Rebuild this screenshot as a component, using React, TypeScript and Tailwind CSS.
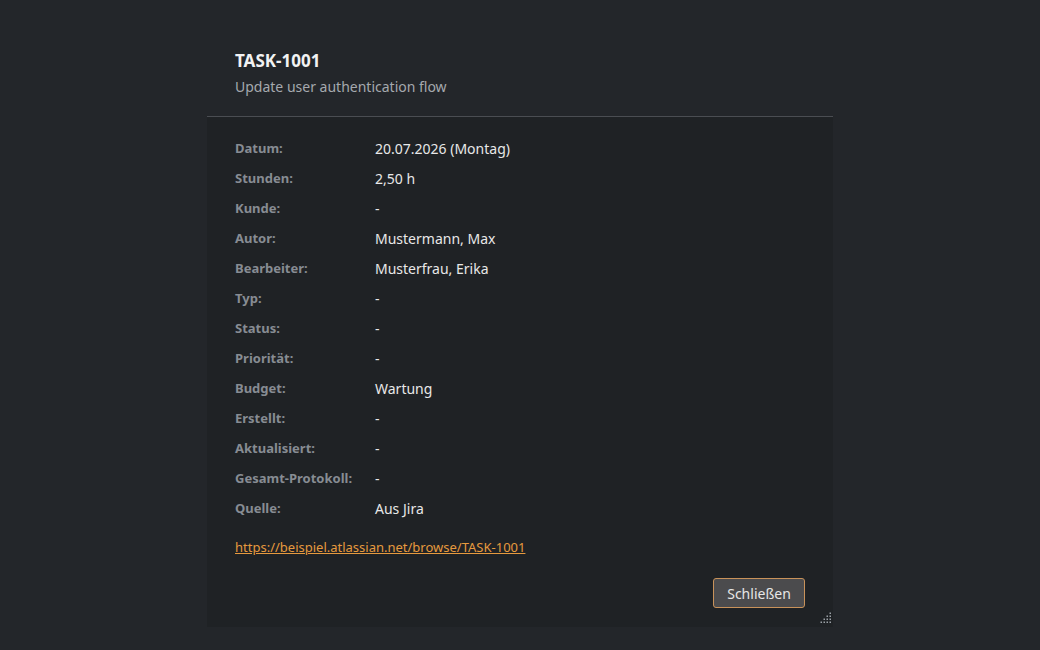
const ROWS: [string, string][] = [
  ['Datum:', '20.07.2026 (Montag)'],
  ['Stunden:', '2,50 h'],
  ['Kunde:', '-'],
  ['Autor:', 'Mustermann, Max'],
  ['Bearbeiter:', 'Musterfrau, Erika'],
  ['Typ:', '-'],
  ['Status:', '-'],
  ['Priorität:', '-'],
  ['Budget:', 'Wartung'],
  ['Erstellt:', '-'],
  ['Aktualisiert:', '-'],
  ['Gesamt-Protokoll:', '-'],
  ['Quelle:', 'Aus Jira'],
];

function ResizeGrip() {
  const dots: [number, number][] = [];
  for (let r = 0; r < 4; r++) {
    for (let c = 3 - r; c < 4; c++) dots.push([c * 3 + 1, r * 3 + 1]);
  }
  return (
    <svg width="12" height="12" viewBox="0 0 12 12" className="absolute bottom-[3px] right-[1px]">
      {dots.map(([x, y]) => (
        <rect key={`${x}-${y}`} x={x - 0.5} y={y - 0.5} width="1.5" height="1.5" fill="#9aa0a6" />
      ))}
    </svg>
  );
}

export default function App() {
  return (
    <div
      className="flex min-h-[650px] w-full justify-center bg-[#23262a] pt-[48px]"
      style={{ fontFamily: '"Noto Sans", "Open Sans", sans-serif' }}
    >
      <div className="flex w-[626px] flex-col">
        <div className="px-[28px] pb-[18px]">
          <h1 className="text-[17px] font-bold leading-[26px] text-[#f2f2f2]">TASK-1001</h1>
          <p className="mt-[2px] text-[14px] leading-[22px] text-[#a5a9ae]">Update user authentication flow</p>
        </div>
        <div className="relative h-[511px] border-t border-[#4a4d52] bg-[#1f2225] px-[28px] pt-[16px]">
          <div className="flex flex-col">
            {ROWS.map(([label, value]) => (
              <div key={label} className="flex h-[30px] items-center">
                <span className="w-[140px] pt-[2px] text-[13px] font-bold text-[#878c93]">{label}</span>
                <span className="text-[14px] text-[#e8e8e8]">{value}</span>
              </div>
            ))}
          </div>
          <a
            href="#"
            className="mt-[14px] inline-block text-[13px] leading-[20px] text-[#e69a3e] underline"
          >
            https://beispiel.atlassian.net/browse/TASK-1001
          </a>
          <div className="mt-[20px] flex justify-end">
            <button className="h-[30px] w-[92px] rounded-[3px] border border-[#c8925a] bg-[#4b4b4d] text-[14px] text-[#e6e6e6]">
              Schließen
            </button>
          </div>
          <ResizeGrip />
        </div>
      </div>
    </div>
  );
}
